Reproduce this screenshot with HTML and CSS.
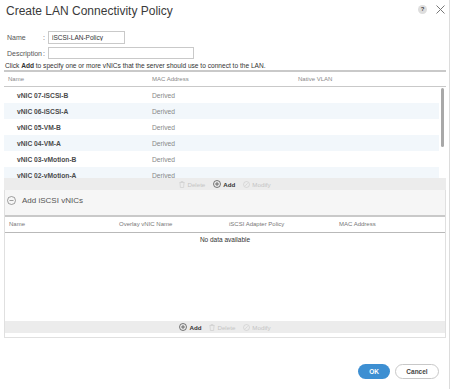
FILE: index.html
```html
<!DOCTYPE html>
<html lang="en">
<head>
<meta charset="utf-8"/>
<meta content="width=device-width, initial-scale=1.0" name="viewport"/>
<title>Create LAN Connectivity Policy</title>
<link rel="stylesheet" href="styles.css">
</head>
<body>
<div class="dialog">
  <div class="dialog-head">
    <h1>Create LAN Connectivity Policy</h1>
    <div class="head-tools">
      <span class="help">?</span>
      <svg class="close" width="9" height="9" viewBox="0 0 9 9"><path d="M0.5 0.5L8.5 8.5M8.5 0.5L0.5 8.5"/></svg>
    </div>
  </div>

  <div class="form">
    <div class="form-row">
      <label for="name">Name</label><span class="colon">:</span>
      <input id="name" class="name-input" type="text" value="iSCSI-LAN-Policy"/>
    </div>
    <div class="form-row">
      <label for="desc">Description</label><span class="colon">:</span>
      <input id="desc" class="desc-input" type="text"/>
    </div>
  </div>

  <p class="hint">Click <b>Add</b> to specify one or more vNICs that the server should use to connect to the LAN.</p>

  <div class="content">
    <div class="vnic-table">
      <div class="thead">
        <span>Name</span>
        <span>MAC Address</span>
        <span>Native VLAN</span>
      </div>
      <div class="tbody-wrap">
        <div class="tbody">
          <div class="row"><span class="cell-name">vNIC 07-iSCSI-B</span><span>Derived</span><span></span></div>
          <div class="row alt"><span class="cell-name">vNIC 06-iSCSI-A</span><span>Derived</span><span></span></div>
          <div class="row"><span class="cell-name">vNIC 05-VM-B</span><span>Derived</span><span></span></div>
          <div class="row alt"><span class="cell-name">vNIC 04-VM-A</span><span>Derived</span><span></span></div>
          <div class="row"><span class="cell-name">vNIC 03-vMotion-B</span><span>Derived</span><span></span></div>
          <div class="row alt"><span class="cell-name">vNIC 02-vMotion-A</span><span>Derived</span><span></span></div>
        </div>
        <div class="scrollbar"><div class="thumb"></div></div>
      </div>
      <div class="toolbar">
        <span class="tool off">
          <svg width="6" height="7" viewBox="0 0 6 7"><path d="M0.5 1.5H5.5M2 1.5V0.6H4V1.5M1 1.5L1.4 6.5H4.6L5 1.5"/></svg>Delete
        </span>
        <span class="tool on">
          <svg width="8" height="8" viewBox="0 0 8 8"><circle cx="4" cy="4" r="3.5"/><path d="M4 2V6M2 4H6"/></svg>Add
        </span>
        <span class="tool off">
          <svg width="7" height="7" viewBox="0 0 7 7"><circle cx="3.5" cy="3.5" r="3"/><path d="M2.2 4.8L4.6 2.4"/></svg>Modify
        </span>
      </div>
    </div>

    <div class="section">
      <div class="section-head">
        <svg width="9" height="9" viewBox="0 0 9 9"><circle cx="4.5" cy="4.5" r="4"/><path d="M2.5 4.5H6.5"/></svg>
        <span>Add iSCSI vNICs</span>
      </div>
      <div class="iscsi-head">
        <span>Name</span>
        <span>Overlay vNIC Name</span>
        <span>iSCSI Adapter Policy</span>
        <span>MAC Address</span>
      </div>
      <div class="iscsi-body">
        <div class="empty">No data available</div>
      </div>
      <div class="toolbar">
        <span class="tool on">
          <svg width="8" height="8" viewBox="0 0 8 8"><circle cx="4" cy="4" r="3.5"/><path d="M4 2V6M2 4H6"/></svg>Add
        </span>
        <span class="tool off">
          <svg width="6" height="7" viewBox="0 0 6 7"><path d="M0.5 1.5H5.5M2 1.5V0.6H4V1.5M1 1.5L1.4 6.5H4.6L5 1.5"/></svg>Delete
        </span>
        <span class="tool off">
          <svg width="7" height="7" viewBox="0 0 7 7"><circle cx="3.5" cy="3.5" r="3"/><path d="M2.2 4.8L4.6 2.4"/></svg>Modify
        </span>
      </div>
    </div>
  </div>

  <div class="footer">
    <button class="btn ok">OK</button>
    <button class="btn cancel">Cancel</button>
  </div>
</div>
</body>
</html>
```

FILE: styles.css
```css
body {
  margin: 0;
  font-family: "Liberation Sans", Arial, sans-serif;
  background-color: #fff;
  color: #333;
}

.dialog {
  width: 450px;
  height: 389px;
  border-right: 1px solid #dcdcdc;
  box-sizing: border-box;
}

/* header */
.dialog-head {
  display: flex;
  justify-content: space-between;
  align-items: center;
  height: 22px;
  padding: 0 4px 0 6px;
}

h1 {
  margin: 0;
  font-size: 12px;
  font-weight: normal;
  color: #3a3a3a;
}

.head-tools {
  display: flex;
  align-items: center;
  gap: 9px;
  margin-top: -3px;
}

.help {
  width: 9px;
  height: 9px;
  border-radius: 50%;
  background-color: #dedede;
  color: #444;
  font-size: 6px;
  font-weight: bold;
  line-height: 9px;
  text-align: center;
}

.close path {
  stroke: #777;
  stroke-width: 1;
  fill: none;
}

/* form */
.form {
  margin-top: 9px;
  padding-left: 7px;
}

.form-row {
  display: flex;
  align-items: center;
  height: 13px;
}

.form-row + .form-row {
  height: 12px;
  margin-top: 3px;
}

.form-row label {
  width: 36px;
  font-size: 7px;
  color: #555;
}

.colon {
  width: 5px;
  font-size: 7px;
  color: #555;
}

.form-row input {
  height: 100%;
  box-sizing: border-box;
  border: 1px solid #c9c9c9;
  padding: 0 3px;
  font-family: "Liberation Sans", Arial, sans-serif;
  font-size: 6.5px;
  color: #333;
  outline: none;
}

.name-input {
  width: 77px;
}

.desc-input {
  width: 146px;
}

.hint {
  margin: 2px 0 0;
  padding-left: 5px;
  font-size: 6.6px;
  line-height: 9px;
  color: #333;
}

/* tables */
.content {
  padding: 0 3px 0 4px;
}

.thead,
.row {
  display: grid;
  grid-template-columns: 148px 146px 1fr;
}

.thead {
  height: 12px;
  padding-top: 2px;
  line-height: 11px;
  border-top: 2px solid #c9c9c9;
  border-bottom: 1px solid #c9c9c9;
  font-size: 6px;
  color: #888;
}

.thead span:first-child {
  padding-left: 4px;
}

.tbody-wrap {
  display: flex;
  height: 91px;
  overflow: hidden;
}

.tbody {
  flex: 1;
}

.row {
  height: 16px;
  align-items: center;
  font-size: 6.7px;
  color: #888;
}

.row.alt {
  background-color: #f2f7fb;
}

.cell-name {
  padding-left: 13px;
  font-weight: bold;
  color: #4a4a4a;
}

.scrollbar {
  width: 7px;
  padding-top: 1px;
}

.thumb {
  width: 3px;
  height: 59px;
  margin-left: 2px;
  border-radius: 2px;
  background-color: #a8a8a8;
}

.toolbar {
  display: flex;
  justify-content: center;
  align-items: center;
  gap: 8px;
  height: 12px;
  background-color: #ececec;
  font-size: 6.2px;
}

.tool {
  display: flex;
  align-items: center;
  gap: 2px;
}

.tool svg {
  fill: none;
  stroke-width: 0.7;
}

.tool.on {
  color: #333;
  font-weight: bold;
}

.tool.on svg {
  stroke: #444;
}

.tool.off {
  color: #c4c4c4;
}

.tool.off svg {
  stroke: #cfcfcf;
}

/* iSCSI section */
.section {
  border: 1px solid #e0e0e0;
  border-top: none;
  padding-bottom: 4px;
}

.section-head {
  display: flex;
  align-items: center;
  gap: 6px;
  height: 20px;
  padding: 0 0 5px 2px;
  background-color: #f6f6f6;
  font-size: 8px;
  color: #555;
}

.section-head svg {
  fill: none;
  stroke: #777;
  stroke-width: 0.7;
}

.iscsi-head {
  display: grid;
  grid-template-columns: repeat(4, 1fr);
  align-items: center;
  height: 14px;
  padding-bottom: 1px;
  border-top: 2px solid #c9c9c9;
  border-bottom: 1px solid #b9b9b9;
  font-size: 6px;
  color: #777;
}

.iscsi-head span {
  padding-left: 4px;
}

.iscsi-body {
  height: 88px;
}

.empty {
  line-height: 14px;
  text-align: center;
  font-size: 6.5px;
  color: #333;
}

/* footer buttons */
.footer {
  display: flex;
  justify-content: flex-end;
  gap: 5px;
  margin-top: 26px;
  padding-right: 10px;
}

.btn {
  height: 15px;
  border-radius: 8px;
  font-family: "Liberation Sans", Arial, sans-serif;
  font-size: 6.5px;
  font-weight: bold;
  padding: 0;
  cursor: pointer;
}

.btn.ok {
  width: 32px;
  border: none;
  background-color: #3d8fd2;
  color: #fff;
}

.btn.cancel {
  width: 44px;
  border: 1px solid #c8c8c8;
  background-color: #fff;
  color: #444;
}
```
